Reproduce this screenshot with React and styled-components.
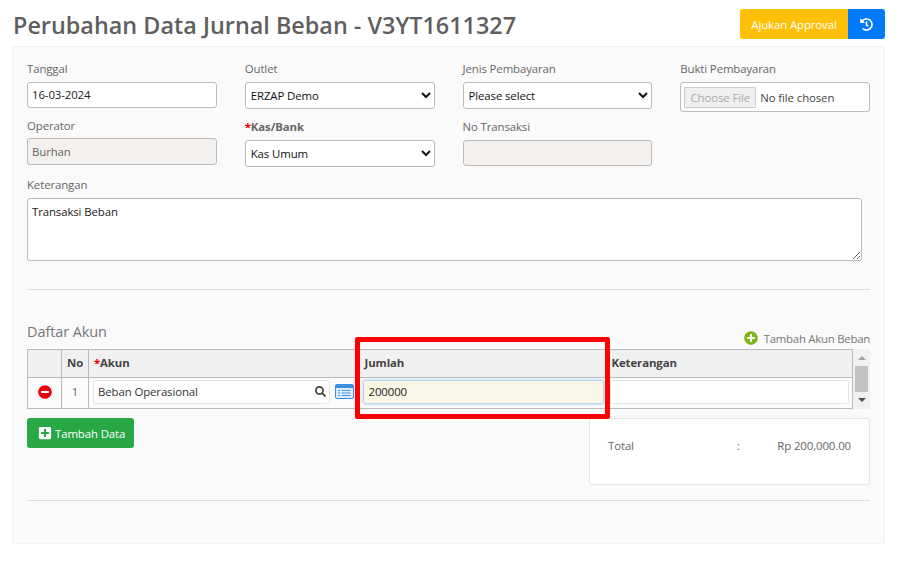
import React from 'react';
import styled, { createGlobalStyle } from 'styled-components';
import { FaHistory, FaSearch, FaMinusCircle, FaPlusCircle, FaPlusSquare } from 'react-icons/fa';

const GlobalStyle = createGlobalStyle`
  html, body {
    margin: 0;
    padding: 0;
    background: #fff;
    font-family: "Open Sans", "Noto Sans", "Liberation Sans", sans-serif;
    font-size: 11.4px;
    letter-spacing: -0.1px;
    color: #666;
  }
  * { box-sizing: border-box; }
`;

const Page = styled.div`
  width: 906px;
  height: 575px;
  padding: 9px 21px 0 12px;
  overflow: hidden;
`;

const Header = styled.div`
  display: flex;
  justify-content: space-between;
  align-items: flex-start;
  height: 37px;
`;

const Title = styled.h1`
  margin: 0;
  padding-left: 1px;
  font-size: 23.4px;
  line-height: 33px;
  font-weight: 600;
  color: #5f5f5f;
  letter-spacing: 0;
`;

const ButtonGroup = styled.div`
  display: flex;
  height: 30px;
`;

const ApprovalButton = styled.button`
  width: 108px;
  border: 0;
  border-radius: 3px 0 0 3px;
  background: #ffc107;
  color: #fff;
  font: inherit;
  letter-spacing: inherit;
`;

const HistoryButton = styled.button`
  width: 37px;
  border: 0;
  border-radius: 0 3px 3px 0;
  background: #007bff;
  color: #fff;
  font-size: 13px;
  display: flex;
  align-items: center;
  justify-content: center;
`;

const Panel = styled.div`
  height: 498px;
  background: #fafafa;
  border: 1px solid #f3f3f3;
  padding: 14px 14px 0;
`;

const FieldGrid = styled.div`
  display: grid;
  grid-template-columns: repeat(4, 1fr);
  column-gap: 28px;
  height: 116px;
`;

const Column = styled.div`
  display: flex;
  flex-direction: column;
`;

const Label = styled.label`
  display: block;
  height: 17px;
  line-height: 15px;
  margin-top: ${({ $top }) => $top || 0}px;
  margin-bottom: ${({ $bottom }) => $bottom || 4}px;
  color: #666;
  font-weight: ${({ $bold }) => ($bold ? 700 : 400)};
  white-space: nowrap;
`;

const Required = styled.span`
  color: #e00;
`;

const TextInput = styled.input`
  display: block;
  width: 100%;
  height: ${({ $h }) => $h || 26}px;
  padding: 0 4px 1px;
  border: 1px solid #bbb;
  border-radius: 3px;
  background: ${({ readOnly }) => (readOnly ? '#f3f0ed' : '#fff')};
  color: ${({ readOnly }) => (readOnly ? '#666' : '#222')};
  font: inherit;
  letter-spacing: inherit;
  outline: none;
`;

const Select = styled.select`
  display: block;
  width: 100%;
  height: 27px;
  padding: 0 0 0 1px;
  border: 1px solid #bbb;
  border-radius: 3px;
  background: #fff;
  color: #111;
  font: inherit;
  letter-spacing: inherit;
`;

const FileBox = styled.div`
  display: flex;
  align-items: center;
  height: 30px;
  padding: 0 3px;
  border: 1px solid #bbb;
  border-radius: 3px;
  background: #fff;
  color: #444;
  gap: 4px;
`;

const FileButton = styled.span`
  display: flex;
  align-items: center;
  justify-content: center;
  width: 72px;
  height: 21px;
  border: 1px solid #ccc;
  border-radius: 1px;
  background: #efefef;
  color: #aaa;
`;

const NoteArea = styled.textarea`
  display: block;
  width: 835px;
  height: 63px;
  padding: 5px 4px;
  border: 1px solid #bbb;
  border-radius: 3px;
  background: #fff;
  color: #222;
  font: inherit;
  letter-spacing: inherit;
  outline: none;
`;

const Divider = styled.hr`
  margin: ${({ $top }) => $top}px 0 0;
  border: 0;
  border-top: 1px solid #ddd;
`;

const ListHeader = styled.div`
  display: flex;
  justify-content: space-between;
  align-items: flex-end;
  height: 50px;
  margin-top: 9px;
`;

const ListTitle = styled.div`
  font-size: 14.5px;
  line-height: 20px;
  color: #777;
  margin-bottom: 7px;
`;

const AddAccount = styled.div`
  display: flex;
  align-items: center;
  gap: 6px;
  height: 16px;
  margin-bottom: 3px;
  color: #777;
  letter-spacing: -0.25px;
  svg { color: #7cb518; font-size: 14px; }
`;

const TableArea = styled.div`
  position: relative;
  display: flex;
  width: 843px;
`;

const Table = styled.table`
  width: 826px;
  height: 60px;
  border-collapse: collapse;
  table-layout: fixed;
  border: 1px solid #b5bcc0;
`;

const HeadCell = styled.th`
  height: 28px;
  padding: 0 5px 2px;
  background: #f0f0f0;
  border-bottom: 1px solid #b5bcc0;
  border-left: ${({ $sep }) => ($sep ? '1px solid #b5bcc0' : '0')};
  text-align: ${({ $center }) => ($center ? 'center' : 'left')};
  font-weight: 700;
  color: #444;
`;

const Cell = styled.td`
  padding: 0 ${({ $right }) => $right || 3}px 3px ${({ $left }) => $left || 3}px;
  background: #fbfbfb;
  border-left: ${({ $sep }) => ($sep ? '1px solid #b5bcc0' : '0')};
  text-align: ${({ $center }) => ($center ? 'center' : 'left')};
`;

const RemoveIcon = styled(FaMinusCircle)`
  display: block;
  margin: 0 auto;
  color: #e8000b;
  font-size: 14px;
`;

const AccountRow = styled.div`
  display: flex;
  align-items: center;
  gap: 5px;
`;

const SearchBox = styled.div`
  flex: 1;
  display: flex;
  align-items: center;
  justify-content: space-between;
  height: 24px;
  padding: 0 3px 0 4px;
  border: 1px solid #e4e4e4;
  border-radius: 3px;
  background: #fff;
  color: #333;
  svg { font-size: 11px; color: #444; }
`;

const RowInput = styled.input`
  display: block;
  width: 100%;
  height: 24px;
  padding: 0 5px;
  border: 1px solid ${({ $active }) => ($active ? '#b8d8f0' : '#e4e4e4')};
  border-radius: 3px;
  background: ${({ $active }) => ($active ? '#f9f6e6' : '#fff')};
  box-shadow: ${({ $active }) => ($active ? '0 0 3px rgba(82,168,236,.6)' : 'none')};
  color: #222;
  font: inherit;
  letter-spacing: inherit;
  outline: none;
`;

const Scrollbar = styled.div`
  width: 17px;
  height: 60px;
  background: #f1f1f1;
  display: flex;
  flex-direction: column;
  align-items: center;
  justify-content: space-between;
  padding: 7px 0 7px;
`;

const Arrow = styled.span`
  width: 0;
  height: 0;
  border-left: 4px solid transparent;
  border-right: 4px solid transparent;
  ${({ $up }) => ($up ? 'border-bottom: 4px solid #a3a3a3;' : 'border-top: 4px solid #505050;')}
`;

const Thumb = styled.span`
  width: 13px;
  height: 26px;
  background: #c1c1c1;
`;

const Highlight = styled.div`
  position: absolute;
  left: 328px;
  top: -12px;
  width: 255px;
  height: 82px;
  border: 5px solid #f00;
  border-radius: 2px;
  pointer-events: none;
`;

const Footer = styled.div`
  display: flex;
  justify-content: space-between;
  align-items: flex-start;
  margin-top: 9px;
  height: 67px;
`;

const AddButton = styled.button`
  display: flex;
  align-items: center;
  gap: 3px;
  width: 107px;
  height: 30px;
  padding: 0 11px;
  border: 0;
  border-radius: 3px;
  background: #28a745;
  color: #fff;
  font: inherit;
  letter-spacing: inherit;
  white-space: nowrap;
  svg { font-size: 14px; flex-shrink: 0; }
`;

const TotalCard = styled.div`
  display: grid;
  grid-template-columns: 129px 1fr auto;
  width: 281px;
  height: 67px;
  padding: 19px 18px 0;
  border: 1px solid #e6e6e6;
  border-radius: 3px;
  background: #fff;
  color: #666;
`;

function CalendarIcon() {
  return (
    <svg width="19" height="15" viewBox="0 0 19 15" style={{ flexShrink: 0 }}>
      <rect x="0.5" y="0.5" width="18" height="14" rx="1.5" fill="#dcecfb" stroke="#3d8fdc" />
      <rect x="1" y="1" width="17" height="3" fill="#3d8fdc" />
      <path d="M3 6.5h2M6.5 6.5h9M3 9h2M6.5 9h9M3 11.5h2M6.5 11.5h9" stroke="#4a96e0" strokeWidth="1.2" />
    </svg>
  );
}

function App() {
  return (
    <Page>
      <GlobalStyle />
      <Header>
        <Title>Perubahan Data Jurnal Beban - V3YT1611327</Title>
        <ButtonGroup>
          <ApprovalButton>Ajukan Approval</ApprovalButton>
          <HistoryButton><FaHistory /></HistoryButton>
        </ButtonGroup>
      </Header>

      <Panel>
        <FieldGrid>
          <Column>
            <Label>Tanggal</Label>
            <TextInput defaultValue="16-03-2024" />
            <Label $top={10} $bottom={3}>Operator</Label>
            <TextInput readOnly $h={27} defaultValue="Burhan" />
          </Column>
          <Column>
            <Label>Outlet</Label>
            <Select defaultValue="ERZAP Demo"><option>ERZAP Demo</option></Select>
            <Label $top={10} $bottom={4} $bold><Required>*</Required>Kas/Bank</Label>
            <Select defaultValue="Kas Umum"><option>Kas Umum</option></Select>
          </Column>
          <Column>
            <Label>Jenis Pembayaran</Label>
            <Select defaultValue="Please select"><option>Please select</option></Select>
            <Label $top={10} $bottom={4}>No Transaksi</Label>
            <TextInput readOnly $h={26} />
          </Column>
          <Column>
            <Label>Bukti Pembayaran</Label>
            <FileBox>
              <FileButton>Choose File</FileButton>
              No file chosen
            </FileBox>
          </Column>
        </FieldGrid>

        <Label $bottom={4}>Keterangan</Label>
        <NoteArea defaultValue="Transaksi Beban" />
        <Divider $top={28} />

        <ListHeader>
          <ListTitle>Daftar Akun</ListTitle>
          <AddAccount><FaPlusCircle />Tambah Akun Beban</AddAccount>
        </ListHeader>

        <TableArea>
          <Table>
            <colgroup>
              <col style={{ width: 34 }} />
              <col style={{ width: 27 }} />
              <col style={{ width: 271 }} />
              <col style={{ width: 247 }} />
              <col />
            </colgroup>
            <thead>
              <tr>
                <HeadCell />
                <HeadCell $sep $center>No</HeadCell>
                <HeadCell $sep><Required>*</Required>Akun</HeadCell>
                <HeadCell>Jumlah</HeadCell>
                <HeadCell>Keterangan</HeadCell>
              </tr>
            </thead>
            <tbody>
              <tr>
                <Cell><RemoveIcon /></Cell>
                <Cell $sep $center>1</Cell>
                <Cell $sep $left={4} $right={6}>
                  <AccountRow>
                    <SearchBox>Beban Operasional<FaSearch /></SearchBox>
                    <CalendarIcon />
                  </AccountRow>
                </Cell>
                <Cell><RowInput $active defaultValue="200000" /></Cell>
                <Cell><RowInput /></Cell>
              </tr>
            </tbody>
          </Table>
          <Scrollbar>
            <Arrow $up />
            <Thumb />
            <Arrow />
          </Scrollbar>
          <Highlight />
        </TableArea>

        <Footer>
          <AddButton><FaPlusSquare />Tambah Data</AddButton>
          <TotalCard>
            <span>Total</span>
            <span>:</span>
            <span>Rp 200,000.00</span>
          </TotalCard>
        </Footer>
        <Divider $top={15} />
      </Panel>
    </Page>
  );
}

export default App;
